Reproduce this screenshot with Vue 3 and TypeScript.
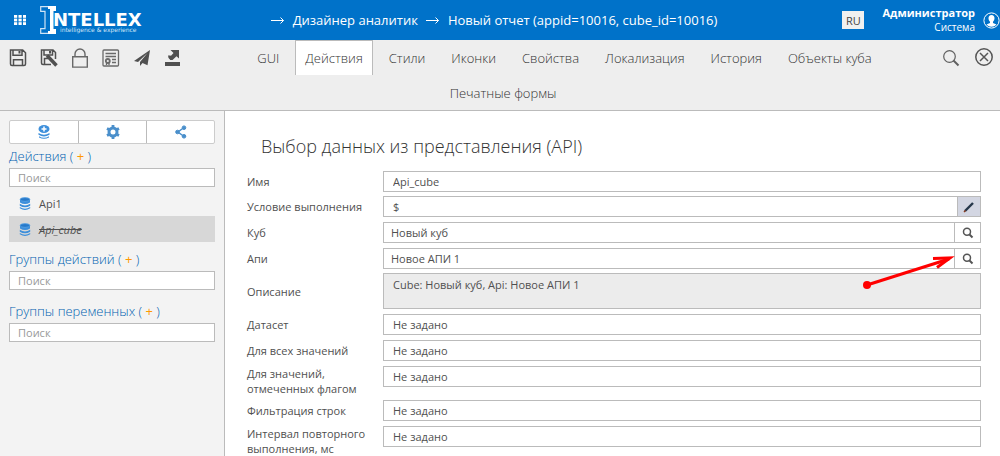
<script setup lang="ts">
import { ref } from 'vue'

interface Field {
  id: string
  label: string
  value: string
  kind: 'text' | 'edit' | 'lookup' | 'area'
  size: 'short' | 'normal' | 'tall' | 'area'
  pointer?: boolean
}

const tabs = ['GUI', 'Действия', 'Стили', 'Иконки', 'Свойства', 'Локализация', 'История', 'Объекты куба', 'Печатные формы']
const activeTab = ref('Действия')

const groups = [
  { id: 'actions', title: 'Действия', items: ['Api1', 'Api_cube'] },
  { id: 'action-groups', title: 'Группы действий', items: [] as string[] },
  { id: 'variable-groups', title: 'Группы переменных', items: [] as string[] },
]
const selected = ref('Api_cube')

const fields = ref<Field[]>([
  { id: 'name', label: 'Имя', value: 'Api_cube', kind: 'text', size: 'short' },
  { id: 'condition', label: 'Условие выполнения', value: '$', kind: 'edit', size: 'normal' },
  { id: 'cube', label: 'Куб', value: 'Новый куб', kind: 'lookup', size: 'normal' },
  { id: 'api', label: 'Апи', value: 'Новое АПИ 1', kind: 'lookup', size: 'short', pointer: true },
  { id: 'description', label: 'Описание', value: 'Cube: Новый куб, Api: Новое АПИ 1', kind: 'area', size: 'area' },
  { id: 'dataset', label: 'Датасет', value: 'Не задано', kind: 'text', size: 'normal' },
  { id: 'all-values', label: 'Для всех значений', value: 'Не задано', kind: 'text', size: 'normal' },
  { id: 'flagged', label: 'Для значений, отмеченных флагом', value: 'Не задано', kind: 'text', size: 'tall' },
  { id: 'filter', label: 'Фильтрация строк', value: 'Не задано', kind: 'text', size: 'normal' },
  { id: 'interval', label: 'Интервал повторного выполнения, мс', value: 'Не задано', kind: 'text', size: 'tall' },
])
</script>

<template>
  <div class="app">
    <header class="header">
      <div class="brand">
        <button class="icon-button" aria-label="Меню">
          <svg width="12" height="10" viewBox="0 0 12 10" fill="#fff">
            <template v-for="y in 3" :key="y">
              <rect v-for="x in 3" :key="x" :x="(x - 1) * 4.5" :y="(y - 1) * 3.6" width="3.2" height="2.8" />
            </template>
          </svg>
        </button>
        <svg class="logo" width="104" height="28" viewBox="0 0 104 28">
          <path d="M9 .7H.7v4.600h4.300v17.400H.7v4.600H9" fill="none" stroke="#cfe4f5" stroke-width="1.200" />
          <path d="M8 0h8v5h-2.500v18H16v5H8v-3h2V3H8z" fill="#fff" />
          <text x="13" y="20" class="logo-name">NTELLEX</text>
          <text x="20" y="26" class="logo-tag">intelligence &amp; experience</text>
        </svg>
      </div>
      <nav class="crumbs">
        <svg class="arrow" width="14" height="9" viewBox="0 0 14 9" fill="none" stroke="#fff"><path d="M0 4.500h12.500M9.500 1.500l3 3-3 3" /></svg>
        <a href="#">Дизайнер аналитик</a>
        <svg class="arrow" width="14" height="9" viewBox="0 0 14 9" fill="none" stroke="#fff"><path d="M0 4.500h12.500M9.500 1.500l3 3-3 3" /></svg>
        <a href="#">Новый отчет (appid=10016, cube_id=10016)</a>
      </nav>
      <div class="account">
        <button class="lang">RU</button>
        <div class="user"><b>Администратор</b><span>Система</span></div>
        <button class="icon-button" aria-label="Профиль">
          <svg width="17" height="17" viewBox="0 0 17 17">
            <circle cx="8.500" cy="8.500" r="7.600" fill="none" stroke="#fff" />
            <path d="M8.500 3c-2 0-3 1.400-3 3.200 0 1.500.7 2.700 1.500 3.500v1.200L3.500 12.500a6.500 6.500 0 0 0 10 0L10 10.900V9.700c.8-.8 1.500-2 1.500-3.500C11.500 4.400 10.500 3 8.500 3z" fill="#fff" />
          </svg>
        </button>
      </div>
    </header>

    <div class="toolbar">
      <div class="tools">
        <button class="icon-button" aria-label="Сохранить">
          <svg width="18" height="18" viewBox="0 0 18 18" fill="none" stroke="#505050" stroke-width="1.500">
            <path d="M1.500 1h12.200L16.500 3.800V15q0 1.500-1.500 1.500H3q-1.500 0-1.500-1.500zM4 1v5.200h9V1M4.500 16.500v-5.700h9v5.700" /><path d="M10.500 2v2.500" stroke-width="2" />
          </svg>
        </button>
        <button class="icon-button" aria-label="Сохранить как">
          <svg width="18" height="18" viewBox="0 0 18 18" fill="none" stroke="#505050" stroke-width="1.500">
            <path d="M15.500 10V3.500L13 1H1.500v13q0 1.500 1.500 1.500h8M4 1v5h8.500V1M4.500 15v-5.500H8" /><path d="M10 2v2.500" stroke-width="2" /><path d="M7 6.500l9.500 10" stroke-width="3.500" />
          </svg>
        </button>
        <button class="icon-button" aria-label="Заблокировать">
          <svg width="18" height="20" viewBox="0 0 18 20" fill="none" stroke="#686868" stroke-width="1.400">
            <path d="M1.700 8.700h14.600v10.400H1.700zM4 8.700V6a5 5 0 0 1 10 0v2.700" />
          </svg>
        </button>
        <button class="icon-button" aria-label="Сертификат">
          <svg width="18" height="18" viewBox="0 0 18 18" fill="none" stroke="#6a6a6a" stroke-width="1.300">
            <rect x="1" y="1" width="15.500" height="16" rx="1" /><path d="M3.500 4.500h10.500M3.500 7.500h10.500M10 10.500h4M10 13.500h4" /><circle cx="5.800" cy="12" r="2" stroke-width="1.800" /><path d="M4.500 14v2M7 14v2" />
          </svg>
        </button>
        <button class="icon-button" aria-label="Отправить">
          <svg width="18" height="18" viewBox="0 0 18 18" fill="#505050">
            <path d="M17 1L1 12l4 .9L14.500 4 7 13v4l2.500-3 5 2.300z" />
          </svg>
        </button>
        <button class="icon-button" aria-label="Выгрузить">
          <svg width="18" height="18" viewBox="0 0 18 18" fill="#505050">
            <path d="M1 13h15v4H1zM6.500 1H15v8.500l-2.500-2.300L8.500 11H6.200L5 9l4.500-5z" /><path d="M4 6.500h2.500L7.800 8 6.500 10.500 4.500 9z" />
          </svg>
        </button>
      </div>
      <div class="tools-right">
        <button class="icon-button" aria-label="Поиск">
          <svg width="18" height="18" viewBox="0 0 18 18" fill="none" stroke="#606060">
            <circle cx="7.500" cy="7.500" r="5.800" stroke-width="1.200" /><path d="M11.500 11.500l5 5" stroke-width="2" />
          </svg>
        </button>
        <button class="icon-button" aria-label="Закрыть">
          <svg width="20" height="20" viewBox="0 0 20 20" fill="none" stroke="#555" stroke-width="1.500">
            <circle cx="10" cy="9" r="8.200" /><path d="M6 5l8 8M14 5l-8 8" />
          </svg>
        </button>
      </div>
      <nav class="tabs">
        <button v-for="tab in tabs" :key="tab" class="tab" :class="{ active: tab === activeTab }" @click="activeTab = tab">{{ tab }}</button>
      </nav>
    </div>

    <div class="body">
      <aside class="sidebar">
        <div class="modes">
          <button aria-label="Данные">
            <svg width="12" height="14" viewBox="0 0 12 14" fill="#3d8fdb">
              <path d="M.5 8q5.500 3.500 11 0v1.800q-5.500 3.200-11 0zM1 11.200q5 3 10 0v1.300q-5 2.500-10 0z" /><ellipse cx="6" cy="4" rx="5.500" ry="4" /><path d="M6 1.500v5M3.500 4h5" stroke="#fff" stroke-width="1.500" />
            </svg>
          </button>
          <button aria-label="Настройки">
            <svg width="14" height="14" viewBox="0 0 14 14" fill="none" stroke="#4a8fcb">
              <circle cx="7" cy="7" r="4" stroke-width="3" /><path d="M7 0v2M7 12v2M1 3.500l2 1M11 9.500l2 1M1 10.500l2-1M11 4.500l2-1" stroke-width="2.800" />
            </svg>
          </button>
          <button aria-label="Поделиться">
            <svg width="12" height="14" viewBox="0 0 12 14" fill="#4a8fcb" stroke="#4a8fcb">
              <path d="M9 2.500L3 7l6 4.500" fill="none" stroke-width="1.500" /><circle cx="9" cy="2.700" r="1.800" /><circle cx="2.500" cy="7" r="1.800" /><circle cx="9" cy="11.300" r="1.800" />
            </svg>
          </button>
        </div>
        <section v-for="group in groups" :key="group.id" class="group">
          <h2>{{ group.title }} ( <a href="#">+</a> )</h2>
          <input type="text" placeholder="Поиск" :aria-label="group.title" />
          <ul v-if="group.items.length">
            <li v-for="item in group.items" :key="item">
              <button :class="{ selected: item === selected }" @click="selected = item">
                <svg width="12" height="14" viewBox="0 -1 12 14" fill="#3d8fdb">
                  <path d="M1 2.500v3q5 3 10 0v-3zM.8 6.700q5.200 3.400 10.400 0v2q-5.200 3-10.400 0zM.8 10q5.200 3.400 10.400 0v1.300q-5.200 3.200-10.400 0z" /><ellipse cx="6" cy="2.500" rx="4.800" ry="1.900" fill="#2779c9" stroke="#5aa5e6" stroke-width=".8" />
                </svg>
                <span>{{ item }}</span>
              </button>
            </li>
          </ul>
        </section>
      </aside>

      <main class="main">
        <h1>Выбор данных из представления (API)</h1>
        <form @submit.prevent>
          <div v-for="field in fields" :key="field.id" class="row" :class="[field.size, field.kind]">
            <label :for="field.id">{{ field.label }}</label>
            <div class="control">
              <textarea v-if="field.kind === 'area'" :id="field.id" v-model="field.value" readonly></textarea>
              <input v-else :id="field.id" v-model="field.value" type="text" />
              <button v-if="field.kind === 'edit'" type="button" aria-label="Изменить">
                <svg width="12" height="12" viewBox="0 0 12 12"><path d="M2 10l8-8" stroke="#26374a" stroke-width="2.400" /><path d="M1 11l1.500-1.500" stroke="#8c3a1c" stroke-width="1.500" /></svg>
              </button>
              <button v-if="field.kind === 'lookup'" type="button" aria-label="Выбрать">
                <svg width="12" height="12" viewBox="0 0 12 12" fill="none" stroke="#555"><circle cx="5" cy="4.800" r="3.500" stroke-width="1.500" /><path d="M7.500 7.500l3 3" stroke-width="2" /></svg>
              </button>
              <svg v-if="field.pointer" class="pointer" width="92" height="44" viewBox="0 0 92 44" fill="none" stroke="#f00">
                <circle cx="4" cy="37" r="4" fill="#f00" stroke="none" />
                <path d="M4 37L86 11" stroke-width="3" /><path d="M70 10.500l17-.5-13 9.500" stroke-width="3" />
              </svg>
            </div>
          </div>
        </form>
      </main>
    </div>
  </div>
</template>

<style>
body {
  overflow: hidden;
}
</style>

<style scoped>
.app {
  min-height: 100vh;
  display: flex;
  flex-direction: column;
  font: 11px/15px "Open Sans", sans-serif;
  color: #505050;
}
.app * {
  box-sizing: border-box;
}
button,
input,
textarea {
  font: inherit;
  color: inherit;
  margin: 0;
  border-radius: 0;
  outline: none;
}
button {
  padding: 0;
  border: 0;
  background: none;
  cursor: pointer;
}
a {
  color: inherit;
  text-decoration: none;
}
svg {
  display: block;
  flex: none;
}
h1,
h2,
ul {
  margin: 0;
  padding: 0;
  list-style: none;
}
h1,
h2 {
  font-weight: 300;
}
.header {
  height: 40px;
  display: grid;
  grid-template-columns: 1fr auto 1fr;
  align-items: center;
  background: #0072c9;
  color: #fff;
}
.brand {
  display: flex;
  align-items: center;
  gap: 14px;
  padding-left: 14px;
}
.logo {
  overflow: visible;
}
.logo-name {
  font: bold 18px "DejaVu Sans", sans-serif;
  fill: #fff;
}
.logo-tag {
  font: 6px "DejaVu Sans", sans-serif;
  fill: #cfe4f5;
}
.crumbs {
  display: flex;
  align-items: center;
  gap: 8px;
  padding-right: 12px;
  font-size: 13px;
  white-space: nowrap;
}
.account {
  display: flex;
  align-items: center;
  justify-content: flex-end;
}
.lang {
  width: 22px;
  height: 18px;
  margin-right: 18px;
  background: #f0f0f0;
  color: #444;
}
.user {
  display: flex;
  flex-direction: column;
  align-items: flex-end;
  margin-right: 8px;
  font-size: 10px;
  line-height: 14px;
}
.user b {
  font-size: 11px;
}
.toolbar {
  background: #eee;
  border-bottom: 1px solid #bbb;
}
.tools,
.tools-right {
  display: flex;
  align-items: center;
  height: 35px;
}
.tools {
  float: left;
  width: 186px;
  gap: 13px;
  padding-left: 9px;
}
.tools-right {
  float: right;
  width: 63px;
  gap: 14px;
  padding-left: 5px;
}
.tabs {
  text-align: center;
  font-size: 0;
}
.tab {
  height: 35px;
  margin-left: 6px;
  padding: 0 9px;
  border: 1px solid transparent;
  border-bottom: 0;
  font-size: 13px;
  font-weight: 300;
  color: #333;
}
.tab.active {
  background: #fff;
  border-color: #bbb;
}
.body {
  flex: 1;
  display: flex;
}
.sidebar {
  width: 225px;
  flex: none;
  padding: 9px;
  background: #f3f3f3;
  border-right: 1px solid #bbb;
}
.modes {
  display: grid;
  grid-template-columns: repeat(3, 1fr);
  height: 24px;
  background: #fff;
  border: 1px solid #ccc;
  border-radius: 2px;
}
.modes button {
  display: grid;
  place-items: center;
}
.modes button + button {
  border-left: 1px solid #bbb;
}
.group {
  margin-bottom: 12px;
}
.modes + .group {
  margin-bottom: 8px;
}
.group h2 {
  padding-bottom: 3px;
  color: #005fb0;
  font-size: 13px;
  line-height: 18px;
}
.modes + .group h2 {
  padding-bottom: 0;
  line-height: 24px;
}
.group h2 a {
  color: #f90;
  font-weight: 400;
}
.group input {
  display: block;
  width: 100%;
  height: 19px;
  padding: 0 8px;
  border: 1px solid #bbb;
  background: #fff;
}
.group input::placeholder {
  color: #999;
}
.group ul {
  padding-top: 3px;
}
.group li button {
  width: 100%;
  height: 26px;
  display: flex;
  align-items: center;
  gap: 8px;
  padding-left: 10px;
}
.group li .selected {
  background: #d7d7d7;
}
.selected span {
  font-style: italic;
  text-decoration: line-through;
}
.main {
  flex: 1;
  min-width: 0;
  height: 345px;
  padding: 23px 19px 0 22px;
}
h1 {
  padding-left: 14px;
  margin-bottom: 13px;
  font-size: 18px;
  line-height: 24px;
  color: #333;
}
.row {
  display: grid;
  grid-template-columns: 136px 1fr;
  height: 26px;
}
.row.short {
  height: 25px;
}
.row.area {
  height: 41px;
}
.row.tall {
  height: 34px;
}
label {
  display: flex;
  align-items: center;
  height: 21px;
  padding-right: 10px;
}
.area label {
  height: 36px;
}
.tall label {
  height: 30px;
}
.control {
  position: relative;
  display: flex;
  height: 21px;
}
.area .control {
  height: 36px;
}
.control input,
.control textarea {
  flex: 1;
  min-width: 0;
  padding: 0 9px;
  border: 1px solid #bbb;
  background: #fff;
}
.control textarea {
  padding: 3px 9px;
  background: #ececec;
  resize: none;
}
.lookup .control input {
  padding: 0 7px;
}
.control button {
  display: grid;
  place-items: center;
  width: 27px;
  margin-left: -1px;
  border: 1px solid #bbb;
  background: #fff;
}
.edit .control button {
  width: 24px;
  background: #d3d6e2;
}
.pointer {
  position: absolute;
  right: 26px;
  top: 0;
  z-index: 1;
  pointer-events: none;
}
</style>
